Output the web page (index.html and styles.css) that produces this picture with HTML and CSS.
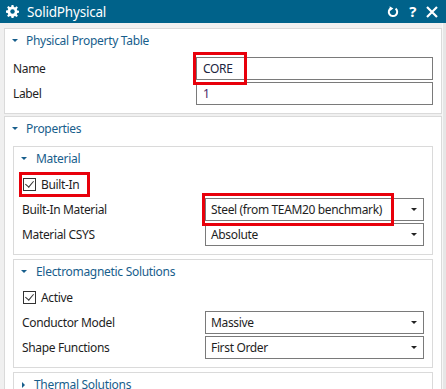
FILE: index.html
```html
<!DOCTYPE html>
<html lang="en">
<head>
  <meta charset="UTF-8" />
  <title>SolidPhysical</title>
  <link rel="stylesheet" href="styles.css">
</head>
<body>

  <div class="titlebar">
    <svg class="gear" width="13" height="13" viewBox="0 0 14 14">
      <path fill="#fff" d="M6 0h2l.4 2 1.3.6 1.7-1.2 1.4 1.4-1.2 1.7.6 1.3 2 .4v2l-2 .4-.6 1.3 1.2 1.7-1.4 1.4-1.7-1.2-1.3.6-.4 2H6l-.4-2-1.3-.6-1.7 1.2-1.4-1.4 1.2-1.7-.6-1.3-2-.4V6l2-.4.6-1.3-1.2-1.7 1.4-1.4 1.7 1.2 1.3-.6z"/>
      <circle cx="7" cy="7" r="2.4" fill="#00628a"/>
    </svg>
    <span class="title">SolidPhysical</span>
    <div class="tools">
      <svg width="12" height="12" viewBox="0 0 12 12">
        <path d="M4 2.2A4.2 4.2 0 1 0 8.6 2.6" fill="none" stroke="#fff" stroke-width="2"/>
        <path d="M2.6 0.2 L6.4 2.6 L3 5 Z" fill="#fff"/>
      </svg>
      <span class="help">?</span>
      <svg width="12" height="12" viewBox="0 0 12 12">
        <path d="M1 1 L11 11 M11 1 L1 11" stroke="#fff" stroke-width="2.2"/>
      </svg>
    </div>
  </div>

  <div class="content">

    <div class="panel">
      <div class="panel-head"><span class="tri"></span>Physical Property Table</div>
      <div class="panel-body top">
        <div class="row">
          <label>Name</label>
          <div class="field name-val">CORE</div>
        </div>
        <div class="row">
          <label>Label</label>
          <div class="field label-val">1</div>
        </div>
      </div>
    </div>

    <div class="panel">
      <div class="panel-head"><span class="tri"></span>Properties</div>
      <div class="panel-body props">

        <div class="panel inner">
          <div class="panel-head"><span class="tri"></span>Material</div>
          <div class="panel-body">
            <div class="check-row"><span class="check"></span>Built-In</div>
            <div class="row">
              <label>Built-In Material</label>
              <div class="field select">Steel (from TEAM20 benchmark)<span class="arrow"></span></div>
            </div>
            <div class="row">
              <label>Material CSYS</label>
              <div class="field select">Absolute<span class="arrow"></span></div>
            </div>
          </div>
        </div>

        <div class="panel inner">
          <div class="panel-head"><span class="tri"></span>Electromagnetic Solutions</div>
          <div class="panel-body">
            <div class="check-row"><span class="check"></span>Active</div>
            <div class="row">
              <label>Conductor Model</label>
              <div class="field select">Massive<span class="arrow"></span></div>
            </div>
            <div class="row">
              <label>Shape Functions</label>
              <div class="field select">First Order<span class="arrow"></span></div>
            </div>
          </div>
        </div>

        <div class="panel inner">
          <div class="panel-head"><span class="tri right"></span>Thermal Solutions</div>
        </div>

      </div>
    </div>

  </div>

  <div class="scroll"></div>

  <div class="mark mark-name"></div>
  <div class="mark mark-builtin"></div>
  <div class="mark mark-steel"></div>

</body>
</html>
```

FILE: styles.css
```css
body { margin: 0; font-family: "Noto Sans", sans-serif; font-size: 12px; letter-spacing: -0.35px; color: #1e1e1e; background: #f0f0f0; overflow: hidden; height: 389px; position: relative; }

.titlebar { height: 23px; background: #00628a; color: #fff; display: flex; align-items: center; padding: 0 8px 0 6px; }
.titlebar .gear { margin-right: 8px; }
.title { font-size: 13.5px; letter-spacing: -0.2px; flex: 1; }
.tools { display: flex; align-items: center; gap: 10px; }
.help { font-weight: bold; font-size: 15px; line-height: 1; }

.content { padding: 5px 4px 0 4px; }
.panel { background: #fff; border: 1px solid #dadada; margin-bottom: 2px; }
.panel-head { height: 23px; display: flex; align-items: center; color: #175e8c; font-size: 12px; letter-spacing: -0.3px; padding-left: 7px; }
.tri { width: 0; height: 0; border-left: 3px solid transparent; border-right: 3px solid transparent; border-top: 3.5px solid #175e8c; margin-right: 8px; }
.tri.right { border-top: 3px solid transparent; border-bottom: 3px solid transparent; border-left: 3.5px solid #175e8c; border-right: 0; margin: 0 11px 0 1px; }

.panel-body { padding: 0 8px 7px 8px; }
.panel-body.top { padding: 4px 8px 7px 8px; }
.panel-body.props { padding-top: 6px; }
.row { display: flex; align-items: center; height: 25px; }
.row label { width: 183px; }
.field { flex: 1; height: 21px; border: 1px solid #7a7a7a; padding: 0 6px; display: flex; align-items: center; position: relative; }
.name-val { color: #1c2440; }
.label-val { color: #4b2868; }
.select { padding: 0 24px 0 5px; }
.arrow { position: absolute; right: 6px; top: 9px; border-left: 3.5px solid transparent; border-right: 3.5px solid transparent; border-top: 3.5px solid #222; }

.inner { margin-bottom: 4px; }
.inner .tri { margin-right: 9px; }
.check-row { height: 25px; padding-top: 2px; display: flex; align-items: center; padding-left: 1px; }
.check { width: 11px; height: 11px; border: 1px solid #333; margin-right: 5px; position: relative; }
.check::after { content: ""; position: absolute; left: 3px; top: 0; width: 4px; height: 7px; border-right: 1.3px solid #333; border-bottom: 1.3px solid #333; transform: rotate(40deg); }

.scroll { position: absolute; right: 0; top: 23px; bottom: 0; width: 3px; background: #e6e6e6; border-left: 1px solid #f7f7f7; }

.mark { position: absolute; border: 3px solid #e8000b; }
.mark-name { left: 193px; top: 52px; width: 48px; height: 27px; }
.mark-builtin { left: 19px; top: 172px; width: 65px; height: 19px; }
.mark-steel { left: 202px; top: 193px; width: 186px; height: 27px; }
```
